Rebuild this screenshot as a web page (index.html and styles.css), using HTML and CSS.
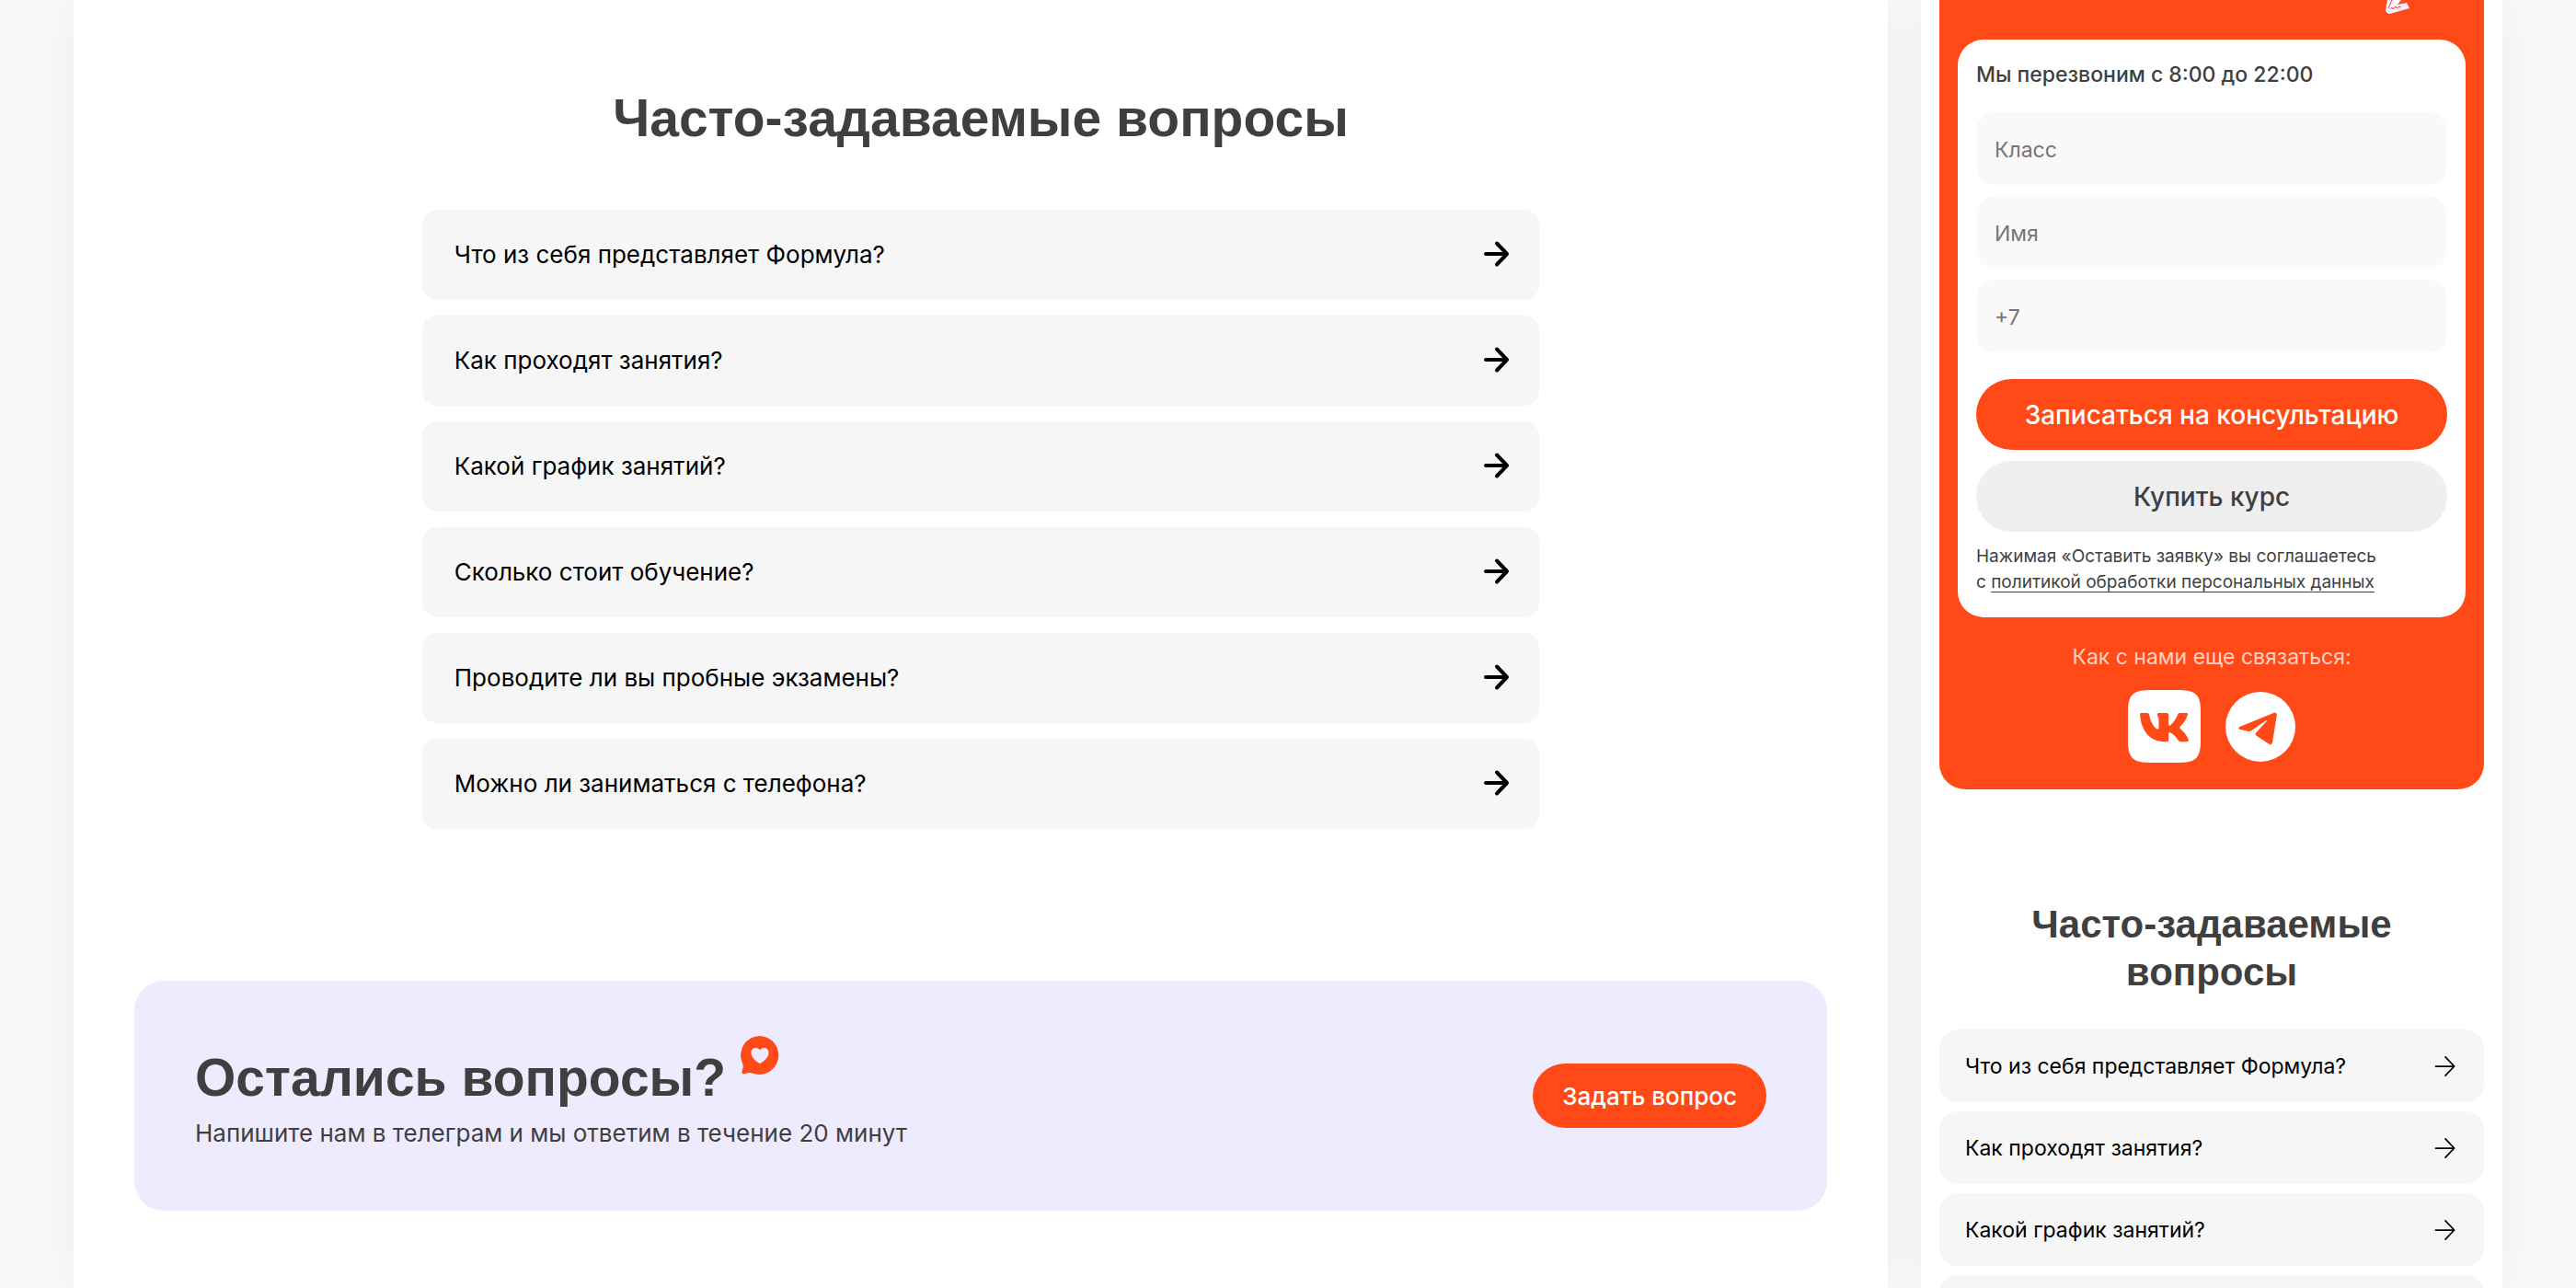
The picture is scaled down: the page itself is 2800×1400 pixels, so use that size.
FILE: index.html
```html
<!DOCTYPE html>
<html lang="ru">
<head>
<meta charset="utf-8">
<title>Формула — вопросы</title>
<link rel="stylesheet" href="styles.css">
</head>
<body>
<svg class="sprite" aria-hidden="true">
  <symbol id="arrow" viewBox="0 0 32 32"><path d="M4 16H27M16 4.500L27 16L16 27.500" fill="none" stroke="currentColor" stroke-linecap="round" stroke-linejoin="round"/></symbol>
</svg>
<main class="stage">
  <section class="desktop">
    <h1 class="title">Часто-задаваемые вопросы</h1>
    <div class="faq">
      <button class="question">Что из себя представляет Формула?<svg class="arrow"><use href="#arrow"/></svg></button>
      <button class="question">Как проходят занятия?<svg class="arrow"><use href="#arrow"/></svg></button>
      <button class="question">Какой график занятий?<svg class="arrow"><use href="#arrow"/></svg></button>
      <button class="question">Сколько стоит обучение?<svg class="arrow"><use href="#arrow"/></svg></button>
      <button class="question">Проводите ли вы пробные экзамены?<svg class="arrow"><use href="#arrow"/></svg></button>
      <button class="question">Можно ли заниматься с телефона?<svg class="arrow"><use href="#arrow"/></svg></button>
    </div>
    <div class="ask">
      <div class="ask-text">
        <div class="ask-head">
          <h2 class="title">Остались вопросы?</h2>
          <svg class="heart" viewBox="0 0 42 42" aria-hidden="true"><path d="M21 0A21 21 0 1 1 12.500 40.500Q10.500 39.500 8 40.200L4 41.200Q1 42 1.500 38.500L2.600 34Q3 32 1.900 29.500A21 21 0 0 1 21 0Z" fill="#ff4917"/><path d="M21 30C17.500 28 11.500 24 11.500 18.500C11.500 12.500 18 11.500 21 15.500C24 11.500 30.500 12.500 30.500 18.500C30.500 24 24.500 28 21 30Z" fill="#f2ebff"/></svg>
        </div>
        <p class="ask-note">Напишите нам в телеграм и мы ответим в течение 20 минут</p>
      </div>
      <button class="ask-button">Задать вопрос</button>
    </div>
  </section>

  <section class="mobile">
    <div class="contact">
      <div class="scribble"><svg viewBox="0 0 28 16" aria-hidden="true"><path d="M3 0L1 10Q1 15 6 15L27 9L24 3L14 5L18 0Z" fill="#f4efff"/><path d="M8 0L4 9M6 10L8 8L9 10L12 7L13 9L16 7L18 8" fill="none" stroke="#ff4917" stroke-width="1"/><path d="M15 0L9 7" fill="none" stroke="#fff" stroke-width="3"/></svg></div>
      <form class="form">
        <p class="form-lead">Мы перезвоним с 8:00 до 22:00</p>
        <div class="fields">
          <input class="field" type="text" placeholder="Класс" aria-label="Класс">
          <input class="field" type="text" placeholder="Имя" aria-label="Имя">
          <input class="field" type="tel" placeholder="+7" aria-label="Телефон">
        </div>
        <div class="actions">
          <button class="action primary" type="button">Записаться на консультацию</button>
          <button class="action" type="button">Купить курс</button>
        </div>
        <p class="legal">Нажимая «Оставить заявку» вы соглашаетесь<br>с <a href="#">политикой обработки персональных данных</a></p>
      </form>
      <p class="social-lead">Как с нами еще связаться:</p>
      <div class="social">
        <a href="#" aria-label="ВКонтакте"><svg class="vk" viewBox="40 30 236 236"><path d="M40 100C40 46 56 30 110 30H206C260 30 276 46 276 100V196C276 250 260 266 206 266H110C56 266 40 250 40 196Z" fill="#fff"/><path d="M83 105H103Q108 105 109 110C113 132 122 148 133 156Q140 160 140 152V128Q140 119 136 112Q133 105 140 105H166Q172 105 172 111V140Q172 149 178 144C190 134 197 120 202 109Q204 105 208 105H230Q236 105 234 111C229 126 221 139 209 149Q206 152 209 155C219 163 229 175 236 189Q239 198 231 198H212Q207 198 204 194C196 182 186 171 177 168Q172 166 172 172V192Q172 198 166 198H158C112 198 83 164 79 111Q78 105 83 105Z" fill="#ff4917"/></svg></a>
        <a href="#" aria-label="Телеграм"><svg class="tg" viewBox="359 35 226 226"><circle cx="472" cy="148" r="113" fill="#fff"/><path d="M405 148L516 103Q526 100 525 110L511 197Q509 208 500 204L459 177Q453 173 457 168L493 129Q496 125 490 128L444 159Q438 164 430 162L405 156Q398 153 405 148Z" fill="#ff4917"/></svg></a>
      </div>
    </div>
    <h2 class="title">Часто-задаваемые<br>вопросы</h2>
    <div class="faq">
      <button class="question">Что из себя представляет Формула?<svg class="arrow"><use href="#arrow"/></svg></button>
      <button class="question">Как проходят занятия?<svg class="arrow"><use href="#arrow"/></svg></button>
      <button class="question">Какой график занятий?<svg class="arrow"><use href="#arrow"/></svg></button>
      <div class="question"></div>
    </div>
  </section>
</main>
</body>
</html>
```
FILE: styles.css
```css
* { box-sizing: border-box; }
body {
  margin: 0;
  background: #f9f9f9;
  color: #3f3f3f;
  font-family: Inter, "Liberation Sans", sans-serif;
}
h1, h2, p { margin: 0; }
button, input { font: inherit; border: 0; margin: 0; }
.sprite { display: none; }

.stage {
  display: grid;
  grid-template-columns: minmax(0, 1972fr) minmax(0, 632fr);
  gap: 36px;
  height: 100vh;
  padding: 0 80px;
  overflow: hidden;
}
.desktop, .mobile {
  min-height: 100vh;
  background: #fff;
  box-shadow: 0 0 50px rgba(0, 0, 0, 0.05);
}
.title {
  font-family: "Liberation Sans", sans-serif;
  font-weight: 700;
  text-align: center;
}

.desktop { padding: 92px 66px 0; }
.desktop .title { font-size: 57px; line-height: 72px; }
.faq { display: flex; flex-direction: column; }
.question {
  display: flex;
  align-items: center;
  justify-content: space-between;
  background: #f6f6f6;
  color: #000;
  text-align: left;
}
.arrow { flex: none; }
.desktop .faq {
  gap: 17px;
  width: 66%;
  margin: 64px auto 0;
}
.desktop .question {
  height: 98px;
  padding: 0 30px 2px 35px;
  border-radius: 16px;
  font-size: 26px;
}
.desktop .arrow { width: 32px; height: 32px; stroke-width: 4; }

.ask {
  display: flex;
  align-items: center;
  justify-content: space-between;
  height: 250px;
  margin-top: 165px;
  padding: 0 66px;
  border-radius: 32px;
  background: #efebff;
}
.ask-text { padding-bottom: 8px; }
.ask-head { display: flex; gap: 16px; }
.desktop .ask-head .title { line-height: 90px; }
.heart { width: 42px; height: 42px; }
.ask-note { font-size: 26px; line-height: 32px; }
.ask-button {
  height: 70px;
  padding: 0 32px;
  border-radius: 35px;
  background: #ff4917;
  color: #fff;
  font-size: 26px;
  font-weight: 500;
}

.mobile { padding: 0 20px; }
.contact {
  padding: 0 20px 29px;
  border-radius: 0 0 28px 28px;
  background: #ff4917;
}
.scribble {
  display: flex;
  justify-content: flex-end;
  height: 43px;
  padding-right: 60px;
}
.scribble svg { width: 28px; height: 16px; }
.form {
  padding: 20px 20px 24px;
  border-radius: 28px;
  background: #fff;
}
.form-lead { font-size: 23px; line-height: 36px; font-weight: 500; }
.fields { display: flex; flex-direction: column; gap: 12px; margin-top: 23px; }
.field {
  width: 100%;
  height: 79px;
  padding: 2px 20px 0;
  border-radius: 20px;
  background: #f9f9f9;
  font-size: 23px;
}
.field::placeholder { color: #757575; }
.actions { display: flex; flex-direction: column; gap: 12px; margin-top: 29px; }
.action {
  height: 77px;
  border-radius: 40px;
  background: #efefef;
  color: #3f3f3f;
  font-size: 28px;
  font-weight: 500;
}
.primary { background: #ff4917; color: #fff; }
.legal { margin-top: 13px; font-size: 19px; line-height: 28px; }
.legal a { color: inherit; text-underline-offset: 4px; }
.social-lead {
  margin-top: 25px;
  color: #ffd2c5;
  font-size: 23px;
  line-height: 36px;
  text-align: center;
}
.social {
  display: flex;
  align-items: center;
  justify-content: center;
  gap: 27px;
  margin-top: 18px;
}
.social svg { display: block; }
.vk { width: 79px; height: 79px; }
.tg { width: 76px; height: 76px; }
.mobile .title { margin-top: 121px; font-size: 42px; line-height: 52px; }
.mobile .faq { gap: 10px; margin-top: 36px; }
.mobile .question {
  height: 79px;
  padding: 0 28px;
  border-radius: 20px;
  font-size: 23px;
}
.mobile .arrow { width: 28px; height: 28px; stroke-width: 2; }
```
